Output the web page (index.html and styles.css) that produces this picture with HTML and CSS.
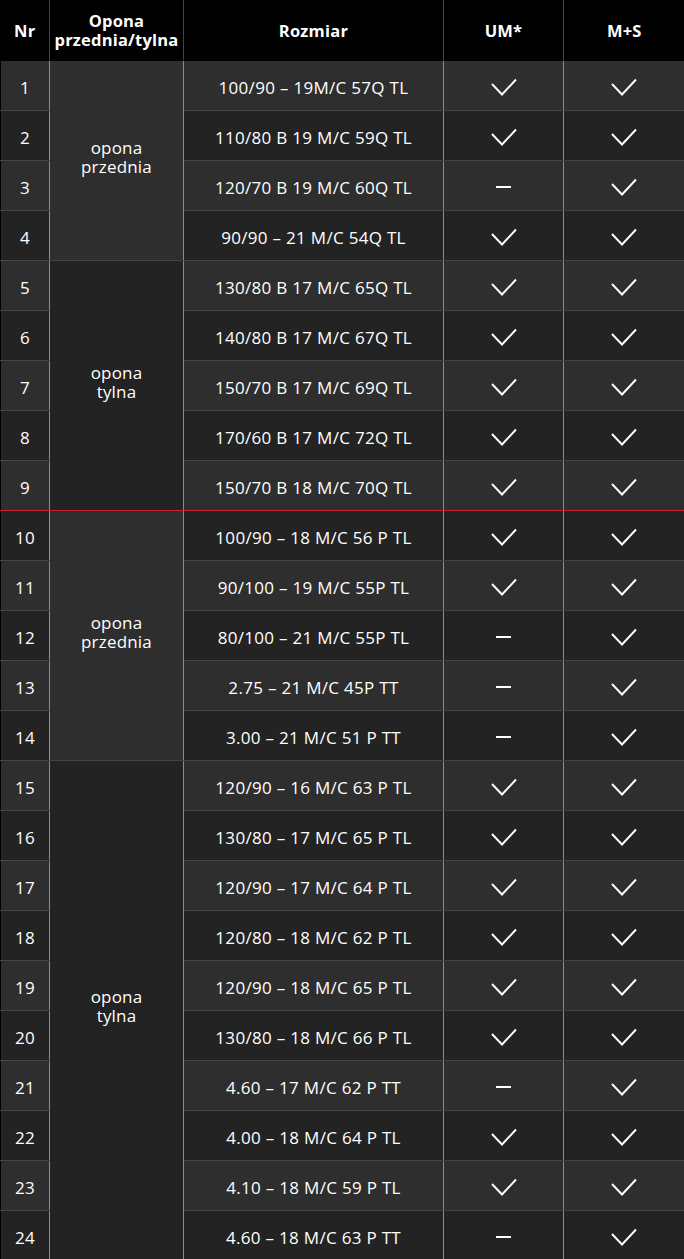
FILE: index.html
```html
<!DOCTYPE html>
<html lang="pl">
  <head>
    <meta charset="utf-8">
    <title>Rozmiary opon</title>
    <link rel="stylesheet" href="styles.css">
  </head>
  <body>
    <table class="sizes">
      <colgroup>
        <col class="c-nr">
        <col class="c-type">
        <col class="c-size">
        <col class="c-um">
        <col class="c-ms">
      </colgroup>
      <thead>
        <tr>
          <th>Nr</th>
          <th>Opona<br>przednia/tylna</th>
          <th>Rozmiar</th>
          <th>UM*</th>
          <th>M+S</th>
        </tr>
      </thead>
      <tbody id="rows"></tbody>
    </table>

    <svg width="0" height="0" style="position:absolute">
      <symbol id="tick" viewBox="0 0 26 18">
        <polyline points="1,6 11,16.5 25,1.5" fill="none" stroke="#fff" stroke-width="1.9"/>
      </symbol>
    </svg>

    <script>
      const data = [
        ["100/90 – 19M/C 57Q TL", 1, 1],
        ["110/80 B 19 M/C 59Q TL", 1, 1],
        ["120/70 B 19 M/C 60Q TL", 0, 1],
        ["90/90 – 21 M/C 54Q TL", 1, 1],
        ["130/80 B 17 M/C 65Q TL", 1, 1],
        ["140/80 B 17 M/C 67Q TL", 1, 1],
        ["150/70 B 17 M/C 69Q TL", 1, 1],
        ["170/60 B 17 M/C 72Q TL", 1, 1],
        ["150/70 B 18 M/C 70Q TL", 1, 1],
        ["100/90 – 18 M/C 56 P TL", 1, 1],
        ["90/100 – 19 M/C 55P TL", 1, 1],
        ["80/100 – 21 M/C 55P TL", 0, 1],
        ["2.75 – 21 M/C 45P TT", 0, 1],
        ["3.00 – 21 M/C 51 P TT", 0, 1],
        ["120/90 – 16 M/C 63 P TL", 1, 1],
        ["130/80 – 17 M/C 65 P TL", 1, 1],
        ["120/90 – 17 M/C 64 P TL", 1, 1],
        ["120/80 – 18 M/C 62 P TL", 1, 1],
        ["120/90 – 18 M/C 65 P TL", 1, 1],
        ["130/80 – 18 M/C 66 P TL", 1, 1],
        ["4.60 – 17 M/C 62 P TT", 0, 1],
        ["4.00 – 18 M/C 64 P TL", 1, 1],
        ["4.10 – 18 M/C 59 P TL", 1, 1],
        ["4.60 – 18 M/C 63 P TT", 0, 1]
      ];

      // first row index of each group -> [label, span, shade]
      const groups = {
        0: ["opona<br>przednia", 4, "light"],
        4: ["opona<br>tylna", 5, "dark"],
        9: ["opona<br>przednia", 5, "light"],
        14: ["opona<br>tylna", 10, "dark"]
      };

      function mark(v) {
        if (v) return '<svg class="tick"><use href="#tick"/></svg>';
        return '<span class="dash"></span>';
      }

      const body = document.getElementById("rows");
      let html = "";
      data.forEach(function (row, i) {
        let cls = i % 2 === 0 ? "odd" : "even";
        if (i === 8) cls += " split";
        html += '<tr class="' + cls + '">';
        html += '<td class="nr">' + (i + 1) + "</td>";
        if (groups[i]) {
          const g = groups[i];
          html += '<td class="type ' + g[2] + (i === 4 ? " split" : "") + '" rowspan="' + g[1] + '"><span>' + g[0] + "</span></td>";
        }
        html += '<td class="size">' + row[0] + "</td>";
        html += '<td class="mark">' + mark(row[1]) + "</td>";
        html += '<td class="mark">' + mark(row[2]) + "</td>";
        html += "</tr>";
      });
      body.innerHTML = html;
    </script>
  </body>
</html>
```

FILE: styles.css
```css
body {
  margin: 0;
  background: #000;
  font-family: "Open Sans", "Noto Sans", sans-serif;
  color: #fff;
}

.sizes {
  width: 684px;
  border-collapse: collapse;
  table-layout: fixed;
  background: #000;
}

.c-nr { width: 49px; }
.c-type { width: 134px; }
.c-size { width: 260px; }
.c-um { width: 120px; }
.c-ms { width: 121px; }

th {
  height: 60px;
  padding: 0 1px;
  font-size: 16.5px;
  font-weight: 700;
  line-height: 19px;
  letter-spacing: 0.2px;
  border-right: 1px solid #444;
  border-bottom: 1px solid #000;
  text-align: center;
  vertical-align: middle;
}

th:last-child {
  border-right: none;
}

td {
  height: 46px;
  padding: 3px 0 0;
  font-size: 17px;
  letter-spacing: 0.3px;
  text-align: center;
  vertical-align: middle;
  border-right: 1px solid #8c8c8c;
  border-bottom: 1px solid #454545;
}

td:last-child {
  border-right: 1px solid #000;
}

td.nr {
  border-left: 1px solid #000;
}

tr.odd td {
  background: #2e2e2e;
}

tr.even td {
  background: #232323;
}

tr.odd td.type.dark,
tr.even td.type.dark {
  background: #232323;
}

tr.odd td.type.light,
tr.even td.type.light {
  background: #2e2e2e;
}

td.type {
  font-size: 17px;
  line-height: 19px;
  letter-spacing: 0.2px;
  padding: 0 0 8px;
}

tr.split td,
td.type.split {
  border-bottom-color: #c8232c;
}

tr:last-child td {
  border-bottom: none;
}

.tick {
  display: block;
  width: 26px;
  height: 18px;
  margin: 0 auto;
}

.dash {
  display: block;
  width: 15px;
  height: 2px;
  margin: 0 auto;
  background: #fff;
}
```
